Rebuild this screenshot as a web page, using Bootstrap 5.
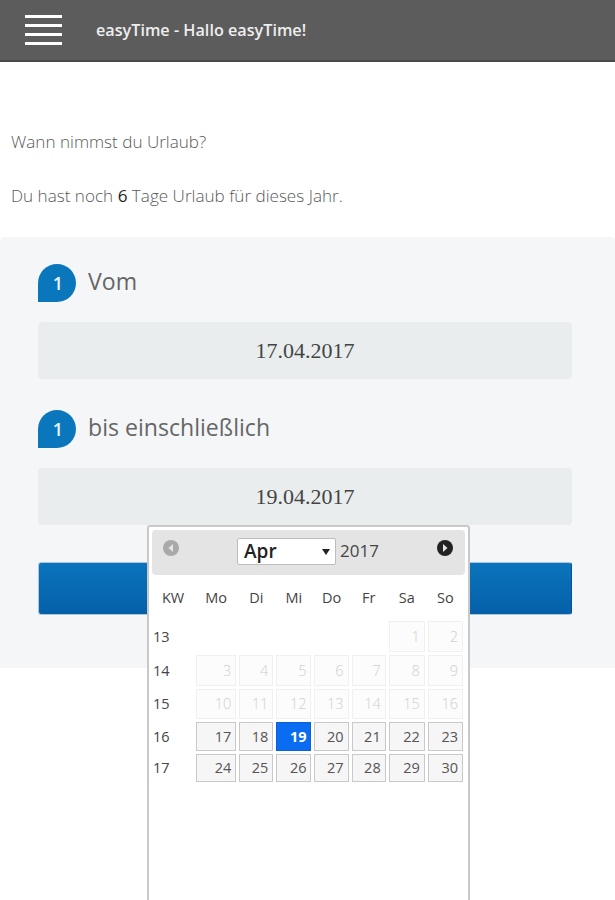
<!DOCTYPE html>
<html lang="de">
<head>
<meta charset="utf-8">
<title>easyTime</title>
<link href="https://cdn.jsdelivr.net/npm/bootstrap@5.3.0/dist/css/bootstrap.min.css" rel="stylesheet">
<style>
html, body { height: 900px; overflow: hidden; }
body { font-family: "Open Sans", "Noto Sans", sans-serif; color: #666; background: #fff; }
.topbar { height: 62px; background: #5c5c5c; border-bottom: 2px solid #4a4a4a; padding-left: 25px; gap: 34px; }
.burger { width: 37px; gap: 6.5px; }
.burger i { display: block; height: 2.5px; background: #fff; }
.toptitle { color: #eee; font-size: 16.2px; font-weight: 600; margin-top: 1px; }
.intro { height: 175px; padding: 67px 11px 0; font-size: 17.1px; font-weight: 300; color: #5a5a5a; }
.intro p { margin: 0 0 28px; line-height: 26px; }
.intro b { color: #222; font-weight: 400; }
.panel-zone { height: 431px; background: #f4f6f8; padding: 27px 43px 0 38px; border-radius: 4px 4px 0 0; }
.drop { width: 38px; height: 38px; background: #0a77bd; color: #e8f4fb; border-radius: 50% 50% 50% 0; font-weight: 600; font-size: 18px; padding-left: 2px; }
.steplabel { font-size: 23.1px; font-weight: 400; color: #666; margin: -3px 0 0 12px; }
.datebox { height: 57px; background: #e9eded; border-radius: 4px; margin: 20px 0 31px; font-family: "Liberation Serif", serif; font-size: 22px; color: #444; font-variant-numeric: oldstyle-nums; }
.submitbar { height: 53px; margin-top: 37px; border: 1px solid #a9c7dd; border-right-color: #0a4f94; border-radius: 3px; background: linear-gradient(#0a74bc, #0560a9); }
.picker { position: absolute; left: 147px; top: 525px; width: 323px; height: 385px; background: #fff; border: 2px solid #c9c9c9; border-bottom-width: 1px; border-radius: 3px 3px 0 0; padding: 3px; z-index: 5; }
.pickerhead { height: 45px; background: #e4e4e4; border-radius: 4px; padding: 0 11px 0 10px; }
.picksel { width: 99px; height: 27px; margin-top: 8px; background: #fff; border: 1px solid #bdbdbd; border-radius: 2px; padding: 0 5px 0 6px; color: #222; font-size: 19px; font-weight: 600; line-height: 1; }
.pickyear { font-size: 17px; color: #444; margin: 8px 0 0 4px; }
.tri { width: 0; height: 0; border: 4px solid transparent; border-top: 6px solid #222; border-bottom: 0; }
.navdot { margin-top: 9px; }
.caltable { border-collapse: separate; border-spacing: 3px; margin-left: -2px; width: 316px; table-layout: fixed; font-size: 14px; color: #444; }
.caltable th { font-weight: 400; font-size: 14.5px; text-align: center; padding: 0; height: 40px; }
.caltable td { padding: 0 4px 0 0; text-align: right; font-size: 14.5px; color: #555; }
.caltable td.kw { padding: 0; text-align: left; color: #444; }
.caltable td.off { background: #fcfcfc; border: 1px solid #f0f0f0; color: #cfcfcf; font-weight: 300; }
.caltable td.on { background: #f6f6f6; border: 1px solid #c9c9c9; }
.caltable td.sel { background: #0a6cf0; border: 1px solid #0a62d8; color: #fff; font-weight: 700; }
.cw40 { width: 40px; } .cw34 { width: 34px; } .cw35 { width: 35px; } .cw36 { width: 36px; }
.rh31 { height: 31px; } .rh30 { height: 30px; } .rh29 { height: 29px; } .rh28 { height: 28px; }
</style>
</head>
<body>
<header class="topbar d-flex align-items-center">
  <div class="burger d-flex flex-column"><i></i><i></i><i></i><i></i></div>
  <div class="toptitle">easyTime - Hallo easyTime!</div>
</header>
<section class="intro">
  <p>Wann nimmst du Urlaub?</p>
  <p>Du hast noch <b>6</b> Tage Urlaub für dieses Jahr.</p>
</section>
<main class="panel-zone">
  <div class="d-flex align-items-center">
    <div class="drop d-flex align-items-center justify-content-center">1</div>
    <div class="steplabel">Vom</div>
  </div>
  <div class="datebox d-flex align-items-center justify-content-center">17.04.2017</div>
  <div class="d-flex align-items-center">
    <div class="drop d-flex align-items-center justify-content-center">1</div>
    <div class="steplabel">bis einschließlich</div>
  </div>
  <div class="datebox d-flex align-items-center justify-content-center">19.04.2017</div>
  <div class="submitbar"></div>
</main>
<aside class="picker">
  <div class="pickerhead d-flex">
    <svg class="navdot" width="18" height="18" viewBox="0 0 18 18"><circle cx="9" cy="9" r="8" fill="#a9a9a9"/><path d="M11 5 L6.5 9 L11 13 Z" fill="#e4e4e4"/></svg>
    <div class="d-flex flex-grow-1 justify-content-center">
      <div class="picksel d-flex align-items-center justify-content-between"><span>Apr</span><span class="tri"></span></div>
      <div class="pickyear">2017</div>
    </div>
    <svg class="navdot" width="18" height="18" viewBox="0 0 18 18"><circle cx="9" cy="9" r="8" fill="#222"/><path d="M7 5 L11.5 9 L7 13 Z" fill="#e4e4e4"/></svg>
  </div>
  <table class="caltable">
    <thead>
      <tr><th class="cw40">KW</th><th class="cw40">Mo</th><th class="cw34">Di</th><th class="cw35">Mi</th><th class="cw34">Do</th><th class="cw34">Fr</th><th class="cw36">Sa</th><th class="cw35">So</th></tr>
    </thead>
    <tbody>
      <tr class="rh31"><td class="kw">13</td><td colspan="5"></td><td class="off">1</td><td class="off">2</td></tr>
      <tr class="rh31"><td class="kw">14</td><td class="off">3</td><td class="off">4</td><td class="off">5</td><td class="off">6</td><td class="off">7</td><td class="off">8</td><td class="off">9</td></tr>
      <tr class="rh30"><td class="kw">15</td><td class="off">10</td><td class="off">11</td><td class="off">12</td><td class="off">13</td><td class="off">14</td><td class="off">15</td><td class="off">16</td></tr>
      <tr class="rh29"><td class="kw">16</td><td class="on">17</td><td class="on">18</td><td class="sel">19</td><td class="on">20</td><td class="on">21</td><td class="on">22</td><td class="on">23</td></tr>
      <tr class="rh28"><td class="kw">17</td><td class="on">24</td><td class="on">25</td><td class="on">26</td><td class="on">27</td><td class="on">28</td><td class="on">29</td><td class="on">30</td></tr>
    </tbody>
  </table>
</aside>
<script src="https://cdn.jsdelivr.net/npm/bootstrap@5.3.0/dist/js/bootstrap.bundle.min.js"></script>
</body>
</html>
